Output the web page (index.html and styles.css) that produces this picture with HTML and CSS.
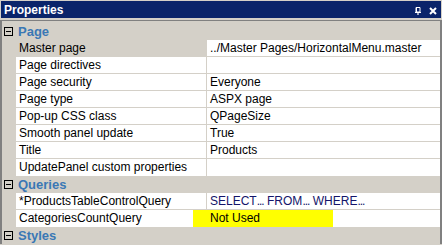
FILE: index.html
```html
<!DOCTYPE html>
<html lang="en">
<head>
    <meta charset="UTF-8">
    <title>Properties</title>
    <link rel="stylesheet" href="styles.css">
</head>
<body>
    <div class="titlebar">
        <span class="title">Properties</span>
        <span class="tools">
            <svg width="8" height="8" viewBox="0 0 8 8">
                <path d="M2 0.5h4v4.5H2z M1 5.5h6" fill="none" stroke="#fff" stroke-width="1"/>
                <path d="M2.5 0.5v4.5" stroke="#fff" stroke-width="1"/>
                <path d="M4 5.5v2.5" stroke="#fff" stroke-width="1.2"/>
            </svg>
            <svg width="8" height="8" viewBox="0 0 8 8">
                <path d="M1 1l6 6M7 1l-6 6" stroke="#fff" stroke-width="2"/>
            </svg>
        </span>
    </div>

    <div class="grid">
        <div class="category"><span class="toggle"></span><span class="cat-name">Page</span></div>
        <div class="row selected"><div class="gutter"></div><div class="label">Master page</div><div class="value">../Master Pages/HorizontalMenu.master</div></div>
        <div class="row"><div class="gutter"></div><div class="label">Page directives</div><div class="value"></div></div>
        <div class="row"><div class="gutter"></div><div class="label">Page security</div><div class="value">Everyone</div></div>
        <div class="row"><div class="gutter"></div><div class="label">Page type</div><div class="value">ASPX page</div></div>
        <div class="row"><div class="gutter"></div><div class="label">Pop-up CSS class</div><div class="value">QPageSize</div></div>
        <div class="row"><div class="gutter"></div><div class="label">Smooth panel update</div><div class="value">True</div></div>
        <div class="row"><div class="gutter"></div><div class="label">Title</div><div class="value">Products</div></div>
        <div class="row last"><div class="gutter"></div><div class="label">UpdatePanel custom properties</div><div class="value"></div></div>

        <div class="category"><span class="toggle"></span><span class="cat-name">Queries</span></div>
        <div class="row"><div class="gutter"></div><div class="label">*ProductsTableControlQuery</div><div class="value query">SELECT<span class="dots">...</span> FROM<span class="dots">...</span> WHERE<span class="dots">...</span></div></div>
        <div class="row last"><div class="gutter"></div><div class="label">CategoriesCountQuery</div><div class="value"><span class="highlight">Not Used</span></div></div>

        <div class="category"><span class="toggle"></span><span class="cat-name">Styles</span></div>
        <div class="row"><div class="gutter"></div><div class="label"></div><div class="value"></div></div>
    </div>
</body>
</html>
```

FILE: styles.css
```css
html, body {
    height: 245px;
    overflow: hidden;
}
body {
    margin: 0;
    background-color: #d4d0c8;
    font-family: "Liberation Sans", Arial, sans-serif;
    font-size: 12px;
    color: #000;
}
.titlebar {
    display: flex;
    align-items: center;
    justify-content: space-between;
    height: 17px;
    margin: 1px 1px 0 1px;
    padding: 0 4px 0 3px;
    background-color: #0a246a;
    color: white;
}
.title {
    font-weight: bold;
    font-size: 12px;
}
.tools {
    display: flex;
    gap: 7px;
    padding-top: 2px;
}
.grid {
    height: 224px;
    overflow: hidden;
    margin-top: 2px;
    padding-top: 2px;
    border-top: 1px solid #808080;
    border-left: 2px solid #808080;
    border-right: 2px solid #808080;
    box-sizing: border-box;
}
.category {
    display: flex;
    align-items: center;
    height: 17px;
}
.toggle {
    position: relative;
    box-sizing: border-box;
    width: 9px;
    height: 9px;
    margin: 0 5px 0 2px;
    border: 1px solid #000;
}
.toggle::after {
    content: "";
    position: absolute;
    left: 1px;
    top: 3px;
    width: 5px;
    height: 1px;
    background-color: #000;
}
.cat-name {
    font-weight: bold;
    font-size: 13px;
    color: #3a78b5;
}
.row {
    display: grid;
    grid-template-columns: 14px 191px 1fr;
    height: 17px;
    line-height: 16px;
}
.label, .value {
    background-color: white;
    border-bottom: 1px solid #d4d0c8;
    white-space: nowrap;
}
.label {
    padding-left: 3px;
    border-right: 1px solid #d4d0c8;
}
.value {
    padding-left: 3px;
}
.row.last .label, .row.last .value {
    border-bottom: none;
    height: 17px;
}
.selected .label {
    background-color: #d4d0c8;
}
.query {
    color: #14146a;
}
.dots {
    letter-spacing: -1px;
}
.highlight {
    display: block;
    width: 123px;
    height: 17px;
    margin-left: -17px;
    padding-left: 17px;
    background-color: #ffff00;
}
```
